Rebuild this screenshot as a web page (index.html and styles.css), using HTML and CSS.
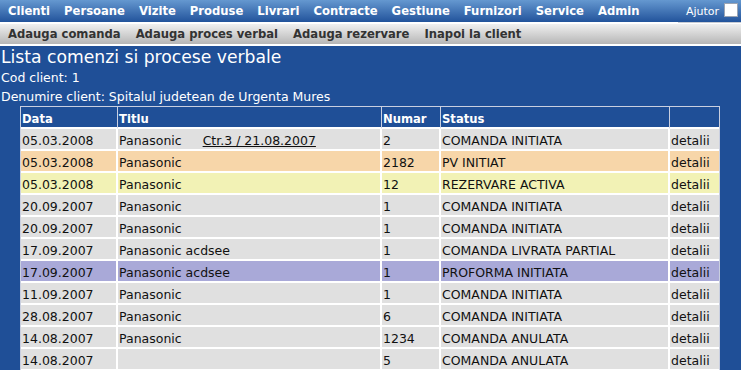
FILE: index.html
```html
<!DOCTYPE html>
<html>
<head>
<meta charset="utf-8">
<title>Lista comenzi si procese verbale</title>
<link rel="stylesheet" href="styles.css">
</head>
<body>
<div class="topbar">
  <nav class="mainmenu">
    <a>Clienti</a><a>Persoane</a><a>Vizite</a><a>Produse</a><a>Livrari</a><a>Contracte</a><a>Gestiune</a><a>Furnizori</a><a>Service</a><a>Admin</a>
  </nav>
  <div class="help"><span>Ajutor</span><span class="check"></span></div>
</div>
<nav class="submenu">
  <a>Adauga comanda</a><a>Adauga proces verbal</a><a>Adauga rezervare</a><a>Inapoi la client</a>
</nav>
<main class="content">
  <h1 class="title">Lista comenzi si procese verbale</h1>
  <div class="info first">Cod client: 1</div>
  <div class="info second">Denumire client: Spitalul judetean de Urgenta Mures</div>
  <table class="orders">
    <colgroup>
      <col class="c-data"><col class="c-titlu"><col class="c-numar"><col class="c-status"><col class="c-det">
    </colgroup>
    <thead>
      <tr><th>Data</th><th>Titlu</th><th>Numar</th><th>Status</th><th></th></tr>
    </thead>
    <tbody>
      <tr><td>05.03.2008</td><td>Panasonic <a class="ctr">Ctr.3 / 21.08.2007</a></td><td>2</td><td>COMANDA INITIATA</td><td>detalii</td></tr>
      <tr class="pv"><td>05.03.2008</td><td>Panasonic</td><td>2182</td><td>PV INITIAT</td><td>detalii</td></tr>
      <tr class="rez"><td>05.03.2008</td><td>Panasonic</td><td>12</td><td>REZERVARE ACTIVA</td><td>detalii</td></tr>
      <tr><td>20.09.2007</td><td>Panasonic</td><td>1</td><td>COMANDA INITIATA</td><td>detalii</td></tr>
      <tr><td>20.09.2007</td><td>Panasonic</td><td>1</td><td>COMANDA INITIATA</td><td>detalii</td></tr>
      <tr><td>17.09.2007</td><td>Panasonic acdsee</td><td>1</td><td>COMANDA LIVRATA PARTIAL</td><td>detalii</td></tr>
      <tr class="prof"><td>17.09.2007</td><td>Panasonic acdsee</td><td>1</td><td>PROFORMA INITIATA</td><td>detalii</td></tr>
      <tr><td>11.09.2007</td><td>Panasonic</td><td>1</td><td>COMANDA INITIATA</td><td>detalii</td></tr>
      <tr><td>28.08.2007</td><td>Panasonic</td><td>6</td><td>COMANDA INITIATA</td><td>detalii</td></tr>
      <tr><td>14.08.2007</td><td>Panasonic</td><td>1234</td><td>COMANDA ANULATA</td><td>detalii</td></tr>
      <tr><td>14.08.2007</td><td></td><td>5</td><td>COMANDA ANULATA</td><td>detalii</td></tr>
    </tbody>
  </table>
</main>
</body>
</html>
```
FILE: styles.css
```css
html, body {
  margin: 0;
  padding: 0;
  background: #ffffff;
  font-family: "DejaVu Sans", Verdana, sans-serif;
  font-size: 12.5px;
}

.topbar {
  height: 22px;
  display: flex;
  justify-content: space-between;
  align-items: stretch;
  background: linear-gradient(#6598d0, #22539b);
}

.mainmenu {
  display: flex;
  gap: 14px;
  padding-left: 8px;
  align-items: center;
}

.mainmenu a {
  color: #ffffff;
  font-weight: bold;
  font-size: 11.6px;
  line-height: 22px;
}

.help {
  display: flex;
  align-items: center;
  gap: 5px;
  padding: 0 3px 0 8px;
  color: #ffffff;
  font-size: 11px;
  border-bottom: 1px solid #c8ccd4;
  margin-bottom: -1px;
  align-self: stretch;
  padding-top: 1px;
}

.check {
  width: 12px;
  height: 12px;
  background: #ffffff;
  border: 1px solid #9aa4b4;
  margin-top: -3px;
}

.submenu {
  margin-top: 2px;
  height: 20px;
  display: flex;
  gap: 15px;
  padding-left: 8px;
  align-items: center;
  background: linear-gradient(#f0f0f0, #b6b6b6);
}

.submenu a {
  color: #333333;
  font-weight: bold;
  font-size: 11.6px;
}

.content {
  margin-top: 2px;
  background: #1f4f97;
  min-height: 324px;
  color: #ffffff;
}

.title {
  margin: 0;
  padding-left: 1px;
  font-size: 17.2px;
  font-weight: normal;
  line-height: 22px;
}

.info {
  padding-left: 1px;
}

.info.first {
  line-height: 20px;
}

.info.second {
  line-height: 18px;
}

.orders {
  margin-left: 20px;
  table-layout: fixed;
  border-collapse: separate;
  border-spacing: 0;
  border: 1px solid #c9cfe0;
  border-bottom: 0;
  background: #ffffff;
  color: #111111;
}

.c-data { width: 97px; }
.c-titlu { width: 264px; }
.c-numar { width: 59px; }
.c-status { width: 229px; }
.c-det { width: 49px; }

.orders th {
  background: #1f4f97;
  color: #ffffff;
  font-weight: bold;
  font-size: 11.6px;
  text-align: left;
  line-height: 14px;
  padding: 5px 1px 1px;
  border-right: 1px solid #c9cfe0;
  border-bottom: 2px solid #ffffff;
}

.orders th:last-child {
  border-right: 0;
}

.orders td {
  background: #e0e0e0;
  line-height: 14px;
  padding: 5px 1px 1px;
  border-right: 2px solid #ffffff;
  border-bottom: 2px solid #ffffff;
  white-space: nowrap;
  overflow: hidden;
}

.orders td:last-child {
  border-right: 0;
}

.orders tr.pv td { background: #f7d6a9; }
.orders tr.rez td { background: #f2f2b5; }
.orders tr.prof td { background: #a9a9d8; }

.ctr {
  margin-left: 17px;
  color: #111111;
  text-decoration: underline;
}
```
